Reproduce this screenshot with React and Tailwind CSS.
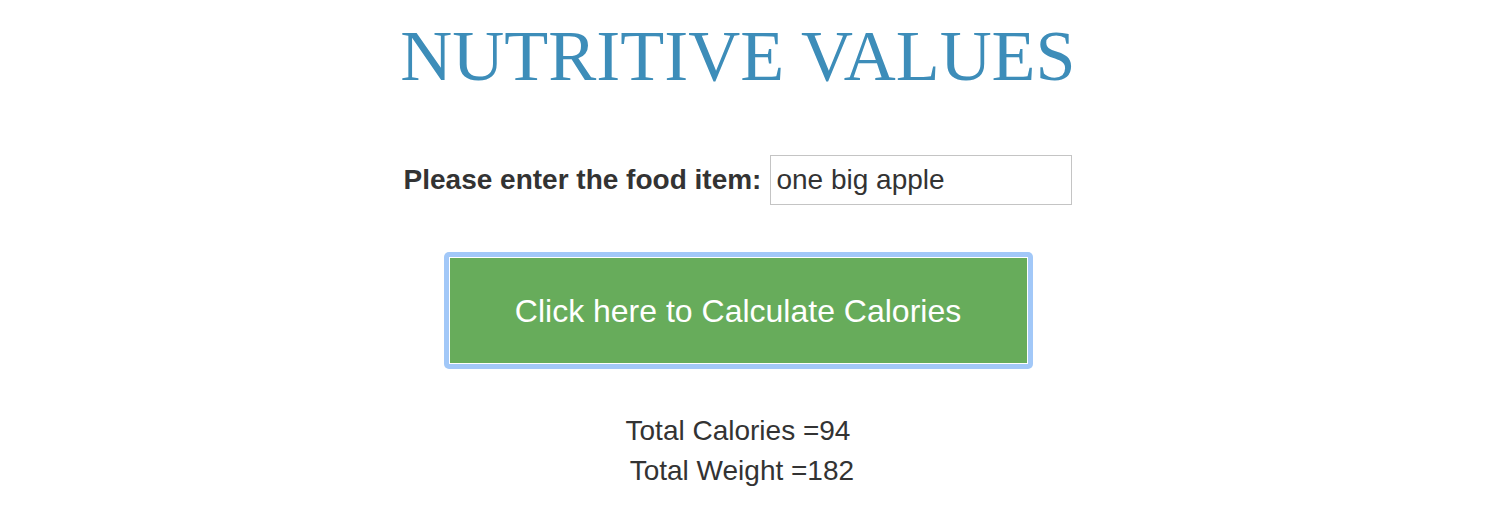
import React from 'react';

export default function App() {
  return (
    <div className="min-h-[510px] bg-white font-['Liberation_Sans',Arial,sans-serif] text-[#333]">
      <div className="flex flex-col items-center pr-[28px]">
        <h1 className="mt-[16px] font-['Liberation_Serif','Times_New_Roman',serif] text-[72px] leading-[80px] text-[#3d8db9]">
          NUTRITIVE VALUES
        </h1>

        <div className="mt-[59px] flex items-center gap-[9px]">
          <label className="text-[28px] font-bold">Please enter the food item:</label>
          <input
            type="text"
            defaultValue="one big apple"
            className="h-[50px] w-[302px] border border-[#c4c4c4] px-[5px] text-[28px] text-[#333] outline-none"
          />
        </div>

        <button className="mt-[47px] rounded-[5px] bg-[#a2c8f8] p-[5px]">
          <span className="flex h-[107px] w-[579px] items-center justify-center border border-white bg-[#67ac5b] text-[32px] text-white">
            Click here to Calculate Calories
          </span>
        </button>

        <div className="mt-[42px] flex flex-col items-center text-[28px] leading-[40px]">
          <p>Total Calories =94</p>
          <p>&nbsp;Total Weight =182</p>
        </div>
      </div>
    </div>
  );
}
